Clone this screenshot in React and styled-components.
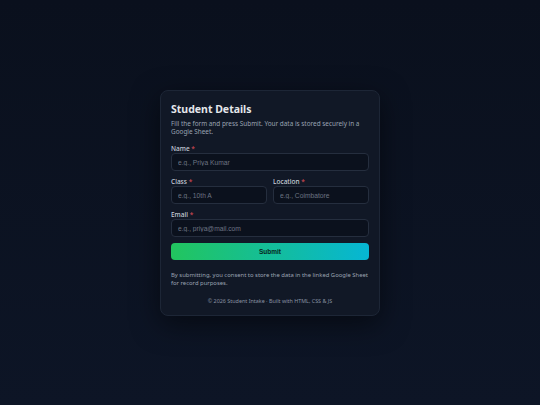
import styled, { createGlobalStyle } from "styled-components";

const Global = createGlobalStyle`
    html, body {
        margin : 0;
        padding : 0;
    }
    body {
        background : linear-gradient(180deg, #0a101d 0%, #0d1526 100%);
        font-family : "Noto Sans", "Open Sans", sans-serif;
        color : #e5e7eb;
    }
    * { box-sizing : border-box; }
`;

const Page = styled.div`
    width : 540px;
    height : 405px;
    display : flex;
    align-items : center;
    justify-content : center;
`;

const Card = styled.div`
    width : 220px;
    background : #111826;
    border : 1px solid #1d2636;
    border-radius : 8px;
    padding : 10px 10px 10px;
    box-shadow : 0 8px 28px rgba(0, 0, 0, 0.5);
`;

const Title = styled.h1`
    margin : 0 0 3px;
    font-size : 10.5px;
    line-height : 16px;
    font-weight : 700;
    color : #e5e7eb;
`;

const Desc = styled.p`
    margin : 0 0 8px;
    font-size : 6.4px;
    line-height : 8.7px;
    color : #9aa3b2;
`;

const Form = styled.form`
    display : flex;
    flex-direction : column;
    gap : 6.5px;
`;

const Row = styled.div`
    display : grid;
    grid-template-columns : 1fr 1fr;
    gap : 6px;
`;

const Field = styled.div`
    display : flex;
    flex-direction : column;
`;

const Label = styled.label`
    font-size : 6.5px;
    line-height : 8px;
    font-weight : 500;
    color : #c7cdd8;
    span {
        color : #d94b55;
    }
`;

const Input = styled.input`
    height : 18.5px;
    width : 100%;
    background : #0b111d;
    border : 1px solid #252e3e;
    border-radius : 4px;
    padding : 0 6px;
    font-family : "Liberation Sans", Arial, sans-serif;
    font-size : 6.7px;
    color : #e5e7eb;
    outline : none;
    &::placeholder {
        color : #6b7383;
    }
`;

const Submit = styled.button`
    margin-top : -1px;
    height : 17px;
    border : none;
    border-radius : 4px;
    background : linear-gradient(90deg, #22c55e 0%, #06b6d4 100%);
    font-family : "Liberation Sans", Arial, sans-serif;
    font-size : 6.5px;
    font-weight : 700;
    color : #06281c;
    cursor : pointer;
`;

const Note = styled.p`
    margin : 11px 0 0;
    font-size : 5.9px;
    line-height : 8.3px;
    color : #9aa3b2;
`;

const Footer = styled.p`
    margin : 9px 0 0;
    text-align : center;
    font-size : 5.4px;
    line-height : 8px;
    color : #8a93a3;
`;

function Req({ children }) {
    return (
        <Label>
            {children} <span>*</span>
        </Label>
    );
}

export default function App() {
    return (
        <>
            <Global />
            <Page>
                <Card>
                    <Title>Student Details</Title>
                    <Desc>Fill the form and press Submit. Your data is stored securely in a Google Sheet.</Desc>
                    <Form onSubmit={(e) => e.preventDefault()}>
                        <Field>
                            <Req>Name</Req>
                            <Input placeholder="e.g., Priya Kumar" />
                        </Field>
                        <Row>
                            <Field>
                                <Req>Class</Req>
                                <Input placeholder="e.g., 10th A" />
                            </Field>
                            <Field>
                                <Req>Location</Req>
                                <Input placeholder="e.g., Coimbatore" />
                            </Field>
                        </Row>
                        <Field>
                            <Req>Email</Req>
                            <Input placeholder="e.g., priya@mail.com" />
                        </Field>
                        <Submit type="submit">Submit</Submit>
                    </Form>
                    <Note>By submitting, you consent to store the data in the linked Google Sheet for record purposes.</Note>
                    <Footer>© 2026 Student Intake · Built with HTML, CSS &amp; JS</Footer>
                </Card>
            </Page>
        </>
    );
}
